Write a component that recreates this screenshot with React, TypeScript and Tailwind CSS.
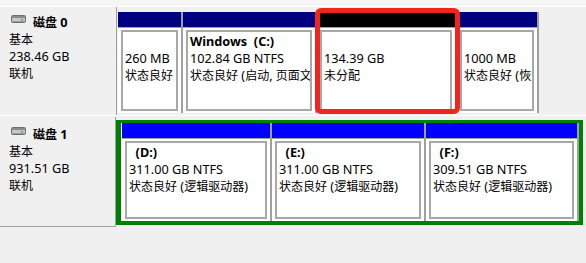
import React from "react";

function DiskIcon() {
  return (
    <svg width="15" height="8" viewBox="0 0 15 8" className="shrink-0">
      <rect x="0.5" y="0.5" width="14" height="7" rx="1" fill="#c8c8c8" stroke="#6e6e6e" />
      <rect x="1" y="1" width="13" height="2" fill="#8a8a8a" />
      <rect x="1" y="6" width="13" height="1" fill="#9a9a9a" />
      <rect x="10" y="4" width="2" height="1.5" fill="#22c922" />
    </svg>
  );
}

// Render mixed text: CJK runs at 12px, Latin runs slightly larger to match the reference widths.
function T({ s }: { s: string }) {
  const parts = s.split(/([\u3000-\u9fff\uff00-\uffef]+)/).filter((p) => p !== "");
  return (
    <>
      {parts.map((p, i) =>
        /[\u3000-\u9fff\uff00-\uffef]/.test(p) ? (
          <span key={i} className="text-[12px]">
            {p}
          </span>
        ) : (
          <span key={i} className="text-[12.7px]">
            {p}
          </span>
        )
      )}
    </>
  );
}

function Lines({ lines }: { lines: string[] }) {
  return (
    <>
      {lines.map((l, i) => (
        <div key={i} className={`h-[17px] leading-[17px] whitespace-pre ${i === 0 ? "font-bold" : ""}`}>
          {l === "" ? "\u00a0" : <T s={l} />}
        </div>
      ))}
    </>
  );
}

function Part({ wClass, headClass, lines }: { wClass: string; headClass: string; lines: string[] }) {
  return (
    <div className={`flex flex-col shrink-0 ${wClass}`}>
      <div className={`h-[15px] shrink-0 ${headClass}`} />
      <div className="h-px shrink-0 bg-[#a0a0a0]" />
      <div className="flex-1 bg-white px-[3px] pt-[2px] pb-[2px] min-h-0">
        <div className="h-full border-2 border-[#a8a8a8] pl-[2px] pt-[1px] overflow-hidden">
          <Lines lines={lines} />
        </div>
      </div>
    </div>
  );
}

function Sep() {
  return <div className="w-[2px] shrink-0 bg-[#a0a0a0]" />;
}

function DiskLabel({ name, size, ptClass, wClass }: { name: string; size: string; ptClass: string; wClass: string }) {
  return (
    <div className={`${wClass} shrink-0 border-r border-[#a0a0a0] pl-[9px] ${ptClass}`}>
      <div className="flex items-start h-[18px]">
        <div className="w-[24px] pl-[2px] pt-[2px]">
          <DiskIcon />
        </div>
        <div className="font-bold leading-[18px] whitespace-pre">
          <T s={name} />
        </div>
      </div>
      <div className="leading-[17px]">
        <T s="基本" />
      </div>
      <div className="leading-[17px]">
        <T s={size} />
      </div>
      <div className="leading-[17px]">
        <T s="联机" />
      </div>
    </div>
  );
}

export default function App() {
  return (
    <div className="relative w-[586px] h-[263px] overflow-hidden bg-[#f0f0f0] text-[12px] text-black font-['Noto_Sans','Noto_Sans_CJK_SC',sans-serif]">
      <div className="h-[6px] bg-[#f6f6f6]" />
      {/* Disk 0 row */}
      <div className="flex h-[110px] border-t border-white border-b border-[#a0a0a0]">
        <DiskLabel name="磁盘 0" size="238.46 GB" ptClass="pt-[6px]" wClass="w-[117px]" />
        <div className="flex pl-px pt-[5px] pb-[2px]">
          <Part wClass="w-[63px]" headClass="bg-[#000080]" lines={["", "260 MB", "状态良好"]} />
          <Sep />
          <Part
            wClass="w-[132px]"
            headClass="bg-[#000080]"
            lines={["Windows  (C:)", "102.84 GB NTFS", "状态良好 (启动, 页面文件, 故障转储, 基本数据分区)"]}
          />
          <Sep />
          <Part wClass="w-[138px]" headClass="bg-black" lines={["", "134.39 GB", "未分配"]} />
          <Sep />
          <Part wClass="w-[80px]" headClass="bg-[#000080]" lines={["", "1000 MB", "状态良好 (恢复分区)"]} />
          <Sep />
        </div>
      </div>
      {/* Disk 1 row */}
      <div className="flex h-[111px] pt-[1px]">
        <DiskLabel name="磁盘 1" size="931.51 GB" ptClass="pt-[8px]" wClass="w-[116px] border-b" />
        <div className="pt-[3px]">
          <div className="flex h-[105px] w-[467px] border-l-[5px] border-r-4 border-t-[3px] border-b-4 border-[#008000] bg-white pl-px">
            <Part wClass="w-[148px]" headClass="bg-[#0000ff]" lines={["  (D:)", "311.00 GB NTFS", "状态良好 (逻辑驱动器)"]} />
            <Sep />
            <Part wClass="w-[152px]" headClass="bg-[#0000ff]" lines={["  (E:)", "311.00 GB NTFS", "状态良好 (逻辑驱动器)"]} />
            <Sep />
            <Part wClass="w-[151px]" headClass="bg-[#0000ff]" lines={["  (F:)", "309.51 GB NTFS", "状态良好 (逻辑驱动器)"]} />
            <Sep />
          </div>
        </div>
      </div>
      {/* Red highlight annotation */}
      <div className="absolute left-[315px] top-[8px] w-[145px] h-[106px] border-[5px] border-[#f3241b] rounded-[6px]" />
    </div>
  );
}
